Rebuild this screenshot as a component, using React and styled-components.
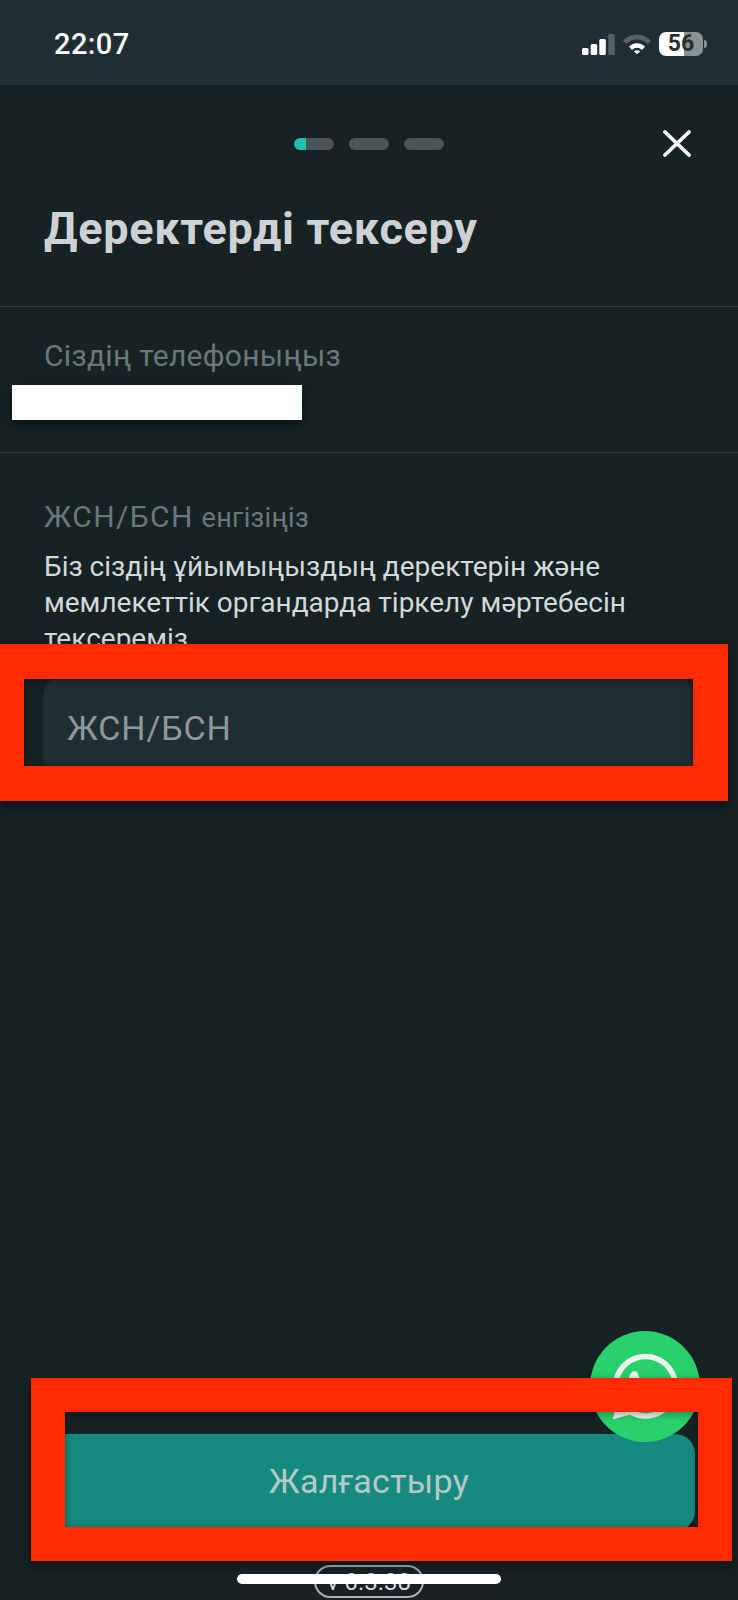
import React from 'react';
import styled, { createGlobalStyle } from 'styled-components';
import { FaWhatsapp } from 'react-icons/fa';

const GlobalStyle = createGlobalStyle`
    html, body {
        margin: 0;
        padding: 0;
        background: #162223;
    }
    * {
        box-sizing: border-box;
    }
`;

const App = () => {
    return (
        <Screen>
            <GlobalStyle />
            <StatusBar>
                <Clock>22:07</Clock>
                <StatusIcons>
                    <SignalIcon />
                    <WifiIcon />
                    <Battery>
                        <BatteryLevel>56</BatteryLevel>
                        <BatteryNub />
                    </Battery>
                </StatusIcons>
            </StatusBar>

            <Header>
                <span />
                <Stepper>
                    <Step $active />
                    <Step />
                    <Step />
                </Stepper>
                <CloseButton aria-label="close">
                    <svg width="28" height="27" viewBox="0 0 28 27">
                        <path d="M2 2 26 25M26 2 2 25" stroke="#fff" strokeWidth="3.8" strokeLinecap="round" />
                    </svg>
                </CloseButton>
            </Header>

            <Title>Деректерді тексеру</Title>

            <PhoneSection>
                <Label>Сіздің телефоныңыз</Label>
                <PhoneRow>
                    <Redaction />
                </PhoneRow>
            </PhoneSection>

            <IdSection>
                <Label><Code>ЖСН/БСН</Code> <Small>енгізіңіз</Small></Label>
                <Description>
                    Біз сіздің ұйымыңыздың деректерін және мемлекеттік органдарда тіркелу мәртебесін тексереміз
                </Description>
                <InputField>ЖСН/БСН</InputField>
            </IdSection>

            <Footer>
                <ContinueButton>Жалғастыру</ContinueButton>
                <Version>v 0.3.38</Version>
            </Footer>

            <WhatsappButton>
                <FaWhatsapp size={75} color="#eef2ee" />
            </WhatsappButton>
            <InputMark />
            <ButtonMark />
            <HomeBar />
        </Screen>
    );
};

export default App;

const SignalIcon = () => (
    <svg width="33" height="21" viewBox="0 0 33 21">
        <rect x="0" y="14" width="6.5" height="7" rx="1.5" fill="#fff" />
        <rect x="8.7" y="10" width="6.5" height="11" rx="1.5" fill="#fff" />
        <rect x="17.3" y="5" width="6.5" height="16" rx="1.5" fill="#fff" />
        <rect x="26.3" y="0" width="6.5" height="21" rx="1" fill="#556265" />
    </svg>
);

const WifiIcon = () => (
    <svg width="28" height="20" viewBox="0 0 28 20">
        <path d="M0 6.5C7.8-1.6 20.2-1.6 28 6.5l-3.2 3.6C18.6 4 9.4 4 3.2 10.1Z" fill="#556265" />
        <path d="M6 12.6c4.6-4.6 11.4-4.6 16 0l-3 3.3c-3-2.8-7-2.8-10 0Z" fill="#fff" />
        <path d="M10.8 17.4c1.9-1.6 4.5-1.6 6.4 0L14 20.2Z" fill="#fff" />
    </svg>
);

const Screen = styled.div`
    position: relative;
    display: flex;
    flex-direction: column;
    width: 738px;
    height: 1600px;
    overflow: hidden;
    background: #162223;
    font-family: Roboto, "Liberation Sans", sans-serif;
`;

const StatusBar = styled.header`
    display: flex;
    flex: none;
    align-items: center;
    justify-content: space-between;
    height: 85px;
    padding: 3px 31px 0 54px;
    background: #202d33;
`;

const Clock = styled.div`
    font-size: 29px;
    font-weight: 500;
    letter-spacing: 0.4px;
    color: #fff;
`;

const StatusIcons = styled.div`
    display: flex;
    align-items: center;
    gap: 8px;
`;

const Battery = styled.div`
    display: flex;
    align-items: center;
`;

const BatteryLevel = styled.div`
    width: 44px;
    height: 24px;
    border-radius: 7px;
    background: linear-gradient(90deg, #fff 57%, #8a9293 57%);
    color: #26302f;
    font-size: 23px;
    font-weight: 700;
    line-height: 24px;
    text-align: center;
`;

const BatteryNub = styled.div`
    width: 3px;
    height: 8px;
    margin-left: 1px;
    border-radius: 0 3px 3px 0;
    background: #8a9293;
`;

const Header = styled.div`
    display: grid;
    flex: none;
    grid-template-columns: 1fr auto 1fr;
    align-items: center;
    height: 27px;
    margin-top: 45px;
    padding: 0 47px;
`;

const Stepper = styled.div`
    display: flex;
    gap: 15px;
`;

const Step = styled.div`
    width: 40px;
    height: 12px;
    border-radius: 6px;
    background: ${props => props.$active
        ? 'linear-gradient(90deg, #1fc0ae 12px, #4a5557 12px)'
        : '#4a5557'};
`;

const CloseButton = styled.div`
    display: flex;
    justify-self: end;
`;

const Title = styled.h1`
    flex: none;
    height: 149px;
    margin: 0;
    padding: 46px 0 0 44px;
    color: #ced2d4;
    font-size: 45px;
    font-weight: 700;
    letter-spacing: 0.7px;
    line-height: 52px;
    white-space: nowrap;
`;

const PhoneSection = styled.section`
    flex: none;
    height: 147px;
    padding: 31px 44px 0;
    border-top: 1px solid #344043;
    border-bottom: 1px solid #344043;
`;

const Label = styled.div`
    color: #6d7779;
    font-size: 30px;
    letter-spacing: 0.3px;
    line-height: 36px;
    white-space: nowrap;
`;

const Code = styled.span`
    letter-spacing: 1.4px;
`;

const Small = styled.span`
    font-size: 27px;
`;

const PhoneRow = styled.div`
    position: relative;
    height: 36px;
    margin-top: 11px;
`;

const Redaction = styled.div`
    position: absolute;
    top: 0;
    left: -32px;
    width: 290px;
    height: 35px;
    background: #fff;
    box-shadow: 0 4px 10px rgba(0, 0, 0, 0.45);
`;

const IdSection = styled.section`
    flex: none;
    padding: 46px 43px 0 44px;
`;

const Description = styled.p`
    margin: 13px 0 0;
    color: #d3d8d9;
    font-size: 28px;
    line-height: 36px;
`;

const InputField = styled.div`
    display: flex;
    align-items: center;
    height: 100px;
    margin: 19px 0 0 -1px;
    padding: 3px 0 0 24px;
    border-radius: 20px;
    background: #202d33;
    color: #8f989a;
    font-size: 34px;
    letter-spacing: 0.85px;
`;

const Footer = styled.footer`
    display: flex;
    flex-direction: column;
    align-items: center;
    margin-top: auto;
    padding-bottom: 2px;
`;

const ContinueButton = styled.div`
    display: flex;
    align-items: center;
    justify-content: center;
    width: 652px;
    height: 97px;
    padding-bottom: 4px;
    border-radius: 20px;
    background: #178a80;
    color: #b5c9c8;
    font-size: 34px;
    letter-spacing: 0.3px;
`;

const Version = styled.div`
    display: flex;
    align-items: center;
    justify-content: center;
    width: 110px;
    height: 33px;
    margin-top: 34px;
    border: 2px solid #aab2b3;
    border-radius: 17px;
    color: #d3d8d9;
    font-size: 24px;
`;

const WhatsappButton = styled.div`
    position: absolute;
    top: 1331px;
    left: 590px;
    display: flex;
    align-items: center;
    justify-content: center;
    width: 110px;
    height: 111px;
    border-radius: 50%;
    background: #29d16c;
`;

const RedMark = styled.div`
    position: absolute;
    border-style: solid;
    border-color: #ff2a00;
    box-shadow: 0 4px 10px rgba(0, 0, 0, 0.45), inset 0 2px 8px rgba(0, 0, 0, 0.35);
`;

const InputMark = styled(RedMark)`
    top: 644px;
    left: 0;
    width: 728px;
    height: 157px;
    border-width: 35px 35px 35px 24px;
`;

const ButtonMark = styled(RedMark)`
    top: 1378px;
    left: 31px;
    width: 701px;
    height: 183px;
    border-width: 34px;
`;

const HomeBar = styled.div`
    position: absolute;
    top: 1574px;
    left: 237px;
    width: 264px;
    height: 10px;
    border-radius: 5px;
    background: #fff;
`;
